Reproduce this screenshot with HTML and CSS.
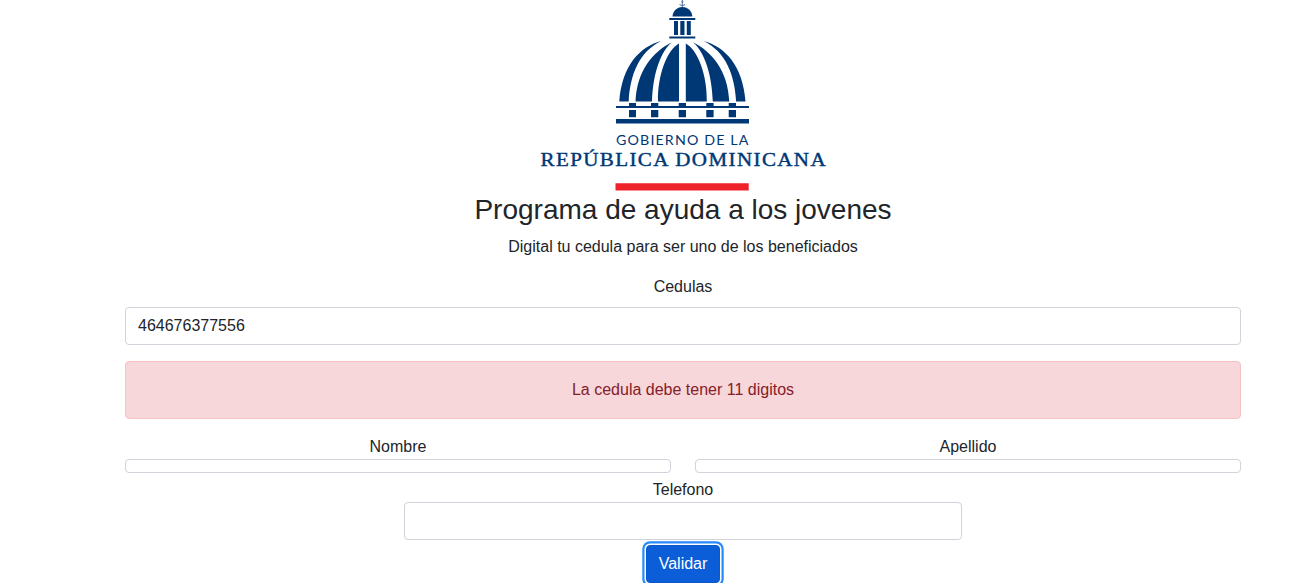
FILE: index.html
```html
<!DOCTYPE html>
<html lang="es">
<head>
<meta charset="utf-8">
<title>Programa de ayuda a los jovenes</title>
<link rel="stylesheet" href="styles.css">
</head>
<body>
<main class="container">
  <svg class="logo" viewBox="533 0 300 192" role="img" aria-label="Gobierno de la República Dominicana">
    <g class="logo-blue">
      <path d="M681.800 0h1v8h-1zM679.500 4l1.500.8h2.700l1.500-.8v1l-1.500.8H681l-1.500-.8zM681 1.500h2.600v.8H681z" opacity=".7"/>
      <path d="M672.500 16.400c.3-5 4.200-9.400 9.900-9.400s9.600 4.400 9.900 9.400z"/>
      <path d="M669.300 18h26v2h-26zM669.300 36.500h26v2h-26zM674 21h4v14h-4zM680.300 21h4.200v14h-4.200zM686.800 21h4v14h-4z"/>
      <path id="ribs" d="M661 41C640 47 622 65 619.300 101.500h9.400C630 75 639 52 661 41zM671.700 42.300C653 52 637 70 635.500 101.500H652C653 76 659 54 671.700 42.300zM679 43.500C667 50 657.500 75 658 101.500h21z"/>
      <use href="#ribs" transform="translate(1364.800 0) scale(-1 1)"/>
      <path d="M616 106h133v2H616zM616 119h133v4.400H616z"/>
      <path d="M629 103h7v5h-7zM651 103h7.300v5H651zM678.700 103h7.300v5h-7.300zM706.300 103h7.300v5h-7.300zM728.700 103h7.300v5h-7.300z"/>
      <path d="M629 110h7v7.200h-7zM651 110h7.300v7.200H651zM678.700 110h7.300v7.200h-7.300zM706.300 110h7.300v7.200h-7.300zM728.700 110h7.300v7.200h-7.300z"/>
      <text class="logo-small" x="616" y="145.300" textLength="133.500" lengthAdjust="spacingAndGlyphs">GOBIERNO DE LA</text>
      <text class="logo-large" x="540.500" y="165.500" textLength="286.500" lengthAdjust="spacingAndGlyphs">REPÚBLICA DOMINICANA</text>
    </g>
    <path class="logo-red" d="M615.500 183.200h133.200v7.300H615.500z"/>
  </svg>
  <h1 class="title">Programa de ayuda a los jovenes</h1>
  <p class="lead">Digital tu cedula para ser uno de los beneficiados</p>
  <form class="form">
    <label class="label" for="cedula">Cedulas</label>
    <input class="field" id="cedula" type="text" value="464676377556">
    <div class="alert" role="alert">La cedula debe tener 11 digitos</div>
    <div class="row">
      <div class="col"><span>Nombre</span><div class="field field-empty"></div></div>
      <div class="col"><span>Apellido</span><div class="field field-empty"></div></div>
    </div>
    <div class="phone">
      <label for="telefono">Telefono</label>
      <input class="field" id="telefono" type="text">
    </div>
    <button class="button" type="button">Validar</button>
  </form>
</main>
</body>
</html>
```
FILE: styles.css
```css
* { box-sizing: border-box; }
html { overflow: hidden; }
body {
  margin: 0;
  font: 16px/24px "Liberation Sans", Arial, sans-serif;
  color: #212529;
  background: #fff;
}
.container {
  width: 1116px;
  margin-left: 125px;
  text-align: center;
}
.logo {
  display: block;
  width: 300px;
  height: 192px;
  margin-left: 408px;
}
.logo-blue { fill: #003876; }
.logo-red { fill: #ee232a; }
.logo-small {
  font: 12.5px Lato, sans-serif;
  letter-spacing: 1px;
}
.logo-large {
  font: 18px "Liberation Serif", serif;
  letter-spacing: 1.2px;
  stroke: #003876;
  stroke-width: .4px;
}
.title {
  margin: 0 0 8px;
  padding-top: 1px;
  font-size: 28px;
  font-weight: 400;
  line-height: 34px;
}
.lead { margin: 0 0 16px; }
.form {
  display: flex;
  flex-direction: column;
  align-items: center;
}
.label { margin-bottom: 8px; }
.field {
  display: block;
  width: 100%;
  height: 38px;
  padding: 6px 12px;
  border: 1px solid #ced4da;
  border-radius: 4px;
  background: #fff;
  color: #212529;
  font: inherit;
}
.field-empty { height: 14px; }
.alert {
  width: 100%;
  margin: 16px 0;
  padding: 16px;
  border: 1px solid #f5c2c7;
  border-radius: 4px;
  background: #f8d7da;
  color: #842029;
}
.row {
  display: grid;
  grid-template-columns: 1fr 1fr;
  gap: 24px;
  width: 100%;
}
.phone {
  width: 558px;
  padding-top: 5px;
}
.button {
  height: 38px;
  margin-top: 5px;
  padding: 6px 12px;
  border: 1px solid #0a58ca;
  border-radius: 4px;
  background: #0b5ed7;
  color: #fff;
  font: inherit;
  box-shadow: 0 0 0 1.5px #fff, 0 0 0 3.700px #268aff;
}
```
